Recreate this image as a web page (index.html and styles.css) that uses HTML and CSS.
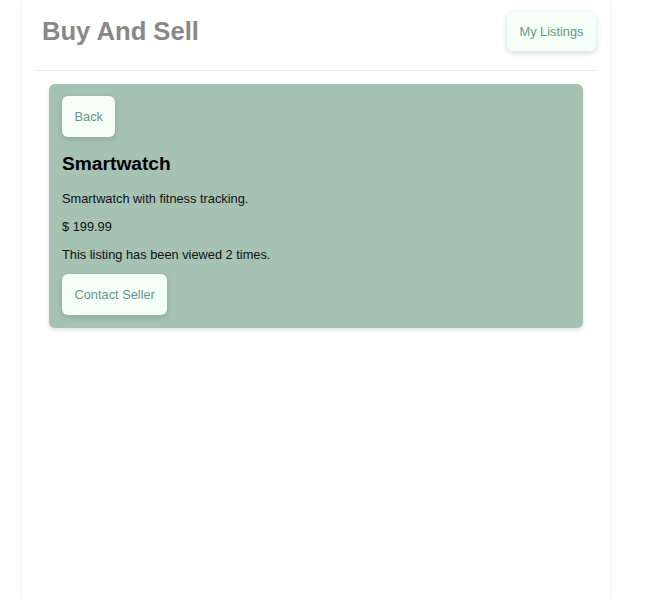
FILE: index.html
```html
<!DOCTYPE html>
<html>
<head>
<meta charset="utf-8">
<link rel="stylesheet" href="styles.css">
</head>
<body>
<div class="app">
  <header class="header">
    <h1 class="title">Buy And Sell</h1>
    <button class="btn">My Listings</button>
  </header>
  <main class="main">
    <section class="card">
      <button class="btn">Back</button>
      <h2 class="item-name">Smartwatch</h2>
      <p class="text">Smartwatch with fitness tracking.</p>
      <p class="text">$ 199.99</p>
      <p class="text">This listing has been viewed 2 times.</p>
      <button class="btn">Contact Seller</button>
    </section>
  </main>
</div>
</body>
</html>
```

FILE: styles.css
```css
html, body {
  margin: 0;
  padding: 0;
  background: #ffffff;
}
body {
  font-family: "Liberation Sans", Arial, sans-serif;
}
.app {
  width: 588px;
  margin-left: 22px;
  min-height: 600px;
  background: #ffffff;
  box-shadow: 0 0 6px rgba(0, 0, 0, 0.08);
  padding: 0 14px;
  box-sizing: border-box;
}
.header {
  display: flex;
  align-items: center;
  justify-content: space-between;
  padding: 12px 0 19px 6px;
  border-bottom: 1px solid #e3efed;
}
.title {
  margin: 0;
  font-size: 25.6px;
  font-weight: bold;
  color: #888888;
}
.btn {
  font-family: "Liberation Sans", Arial, sans-serif;
  font-size: 12.8px;
  line-height: 17px;
  color: #66968f;
  background: #f5fff8;
  border: none;
  border-radius: 6px;
  padding: 11px 12px;
  box-shadow: 0 2px 6px rgba(0, 0, 0, 0.15);
  cursor: pointer;
}
.header .btn {
  padding: 11px 12.5px;
}
.main {
  padding: 13px 13px 0;
}
.card {
  background: #a5c2b3;
  border-radius: 6px;
  padding: 12px 13px 13px;
  box-shadow: 0 2px 4px rgba(0, 0, 0, 0.12);
  display: flex;
  flex-direction: column;
  align-items: flex-start;
}
.card .btn {
  padding: 12px 12.5px;
}
.item-name {
  margin: 16px 0 16px;
  font-size: 19.2px;
  font-weight: bold;
  color: #000000;
}
.text {
  margin: 0 0 12.8px;
  font-size: 12.8px;
  color: #111111;
}
```
